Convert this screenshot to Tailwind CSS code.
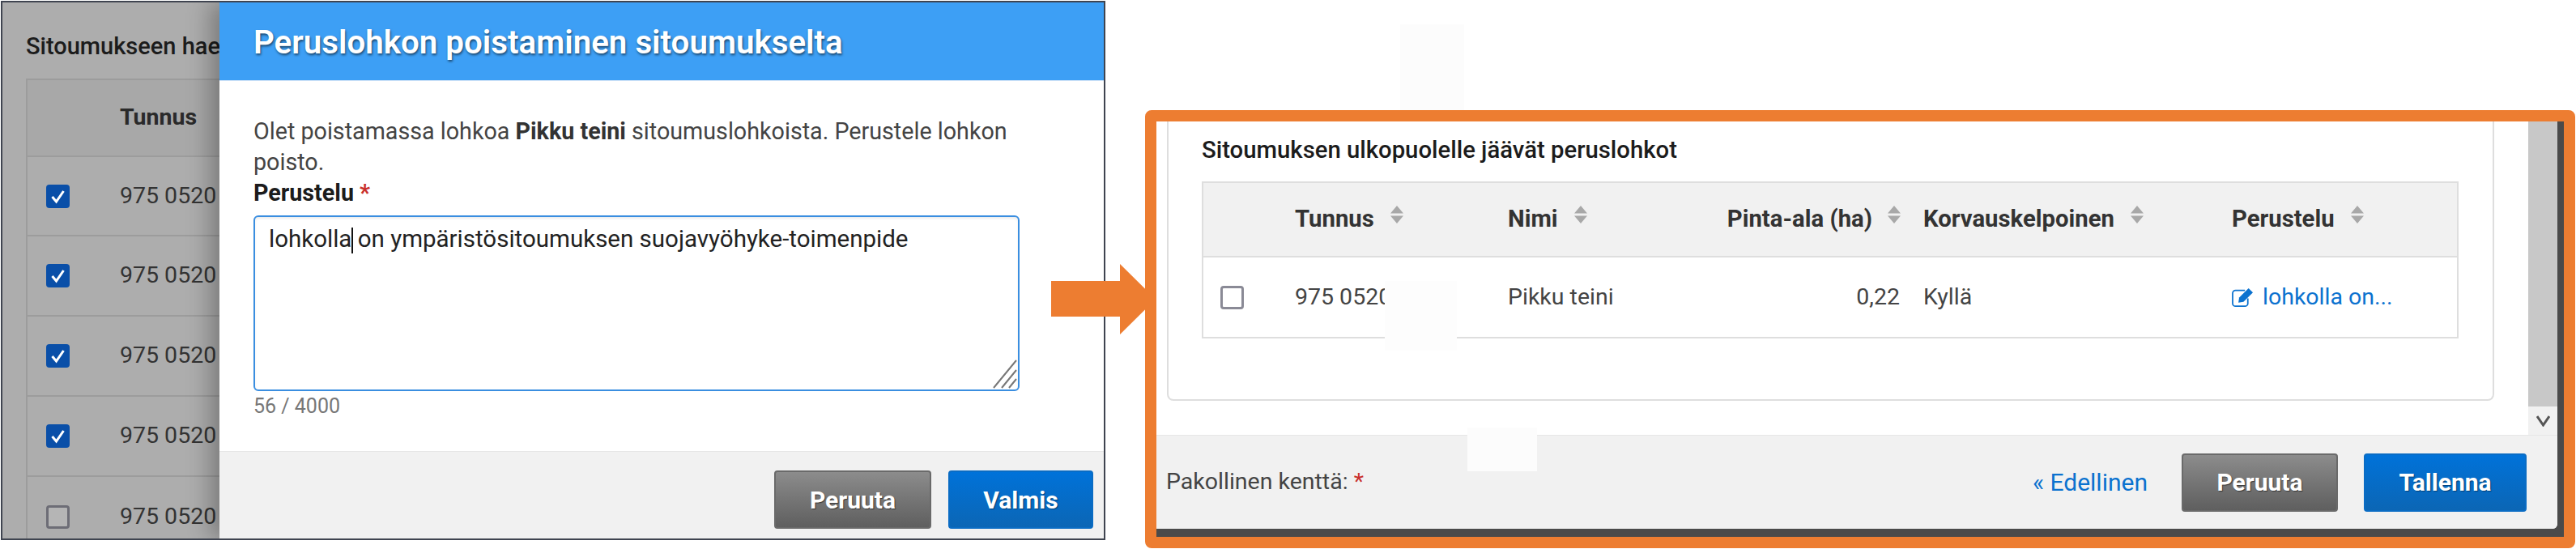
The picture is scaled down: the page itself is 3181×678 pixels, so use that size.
<!DOCTYPE html>
<html lang="fi">
<head>
    <meta charset="UTF-8">
    <title>Peruslohkon poistaminen sitoumukselta</title>
    <script src="https://cdn.jsdelivr.net/npm/@tailwindcss/browser@4"></script>
</head>
<body class="bg-white overflow-hidden font-['Roboto',sans-serif] text-[#444] text-[28.5px]">

<svg class="hidden">
    <symbol id="sort" viewBox="0 0 16 22"><path d="M8 0l8 9.500H0zM0 12.500h16L8 22z" fill="#a8a8a8"/></symbol>
    <symbol id="check" viewBox="0 0 29 29"><rect width="29" height="29" rx="4" fill="#0a4fa8"/><path d="M7.500 15l5 6L21.500 8" fill="none" stroke="#fff" stroke-width="3"/></symbol>
</svg>

<div class="relative w-[3181px] h-[678px]">

    <!-- left window -->
    <div class="absolute left-[1px] top-[1px] w-[1364px] h-[666px] border-2 border-[#3f4450] bg-[#adadad] overflow-hidden">
        <div class="w-[268px] overflow-hidden">
            <div class="pl-[29px] pt-[36px] h-[94px] font-medium text-[29px] text-[#1c1c1c] leading-[36px] whitespace-nowrap">Sitoumukseen hae</div>
            <div class="ml-[29px] border-l-2 border-[#9c9c9c]">
                <div class="h-[97px] border-y-2 border-[#9c9c9c] bg-[#a8a8a8] pl-[114px] flex items-center font-bold text-[#2a2a2a] text-[28.5px] whitespace-nowrap">Tunnus <svg class="ml-[21px] w-4 h-[22px] -mt-3 shrink-0"><use href="#sort"/></svg></div>
                <div class="h-[98px] border-b-2 border-[#9c9c9c] flex items-center whitespace-nowrap">
                    <svg class="ml-[23px] w-[29px] h-[29px] shrink-0"><use href="#check"/></svg><span class="ml-[62px] text-[#333]">975 0520</span>
                </div>
                <div class="h-[99px] border-b-2 border-[#9c9c9c] flex items-center whitespace-nowrap">
                    <svg class="ml-[23px] w-[29px] h-[29px] shrink-0"><use href="#check"/></svg><span class="ml-[62px] text-[#333]">975 0520</span>
                </div>
                <div class="h-[99px] border-b-2 border-[#9c9c9c] flex items-center whitespace-nowrap">
                    <svg class="ml-[23px] w-[29px] h-[29px] shrink-0"><use href="#check"/></svg><span class="ml-[62px] text-[#333]">975 0520</span>
                </div>
                <div class="h-[99px] border-b-2 border-[#9c9c9c] flex items-center whitespace-nowrap">
                    <svg class="ml-[23px] w-[29px] h-[29px] shrink-0"><use href="#check"/></svg><span class="ml-[62px] text-[#333]">975 0520</span>
                </div>
                <div class="h-[99px] flex items-center whitespace-nowrap">
                    <div class="ml-[23px] w-[29px] h-[29px] shrink-0 rounded border-[3px] border-[#6d6d76] bg-[#b5b5b5]"></div><span class="ml-[62px] text-[#333]">975 0520</span>
                </div>
            </div>
        </div>

        <!-- modal -->
        <div class="absolute left-[268px] top-0 right-0 bottom-0 bg-white flex flex-col shadow-[-12px_0_26px_rgba(0,0,0,.28)]">
            <div class="h-[97px] shrink-0 bg-[#3d9ff5] border-b border-[#cfe3f7] pl-[42px] pt-[4px] flex items-center text-white font-semibold text-[40.300px] [text-shadow:1px_2px_3px_rgba(0,0,0,.55)]">Peruslohkon poistaminen sitoumukselta</div>
            <div class="flex-1 pl-[42px] pr-[104px] pt-[43px] leading-[38px] text-[28.700px]">
                <p>Olet poistamassa lohkoa <b class="font-bold text-[#333]">Pikku teini</b> sitoumuslohkoista. Perustele lohkon poisto.</p>
                <div class="font-bold text-[#1c1c1c]">Perustelu <span class="text-[#c9302c]">*</span></div>
                <div class="relative mt-[9px] h-[217px] border-2 border-[#3a8ee0] rounded-md pl-[17px] pt-[10px] text-[#222] text-[29.500px] leading-[34px] shadow-[inset_0_2px_3px_rgba(0,0,0,.08)]">
                    lohkolla<span class="inline-block w-[2px] h-[32px] -mr-[2px] align-middle bg-[#111]"></span> on ympäristösitoumuksen suojavyöhyke-toimenpide
                    <svg class="absolute right-[1px] bottom-[1px] w-[30px] h-[36px]" viewBox="0 0 30 36" fill="none" stroke="#777" stroke-width="2"><path d="M1 35L29 1M11 35L29 13M20 35L29 24"/></svg>
                </div>
                <div class="mt-[3px] text-[25px] leading-[32px] text-[#777]">56 / 4000</div>
            </div>
            <div class="h-[108px] shrink-0 bg-[#f1f1f1] border-t border-[#e6e6e6] flex justify-end items-start pt-[23px] pr-[13px] gap-[21px]">
                <button class="w-[194px] h-[72px] rounded border-2 border-[#6a6a6a] bg-linear-to-b from-[#8c8c8c] to-[#5f5f5f] text-white font-bold text-[30px] [text-shadow:1px_1px_1px_rgba(0,0,0,.5)]">Peruuta</button>
                <button class="w-[179px] h-[72px] rounded border-2 border-[#0a6cc4] bg-linear-to-b from-[#0072d9] to-[#0b66b5] text-white font-bold text-[30px] [text-shadow:1px_1px_1px_rgba(0,0,0,.4)]">Valmis</button>
            </div>
        </div>
    </div>

    <!-- arrow between the two views -->
    <svg class="absolute left-[1298px] top-[326px] w-[130px] h-[87px]" viewBox="0 0 130 87"><path d="M0 21h85V0l44 43.500L85 87V65H0z" fill="#ed7d31"/></svg>

    <!-- faint erased patches -->
    <div class="absolute left-[1729px] top-[30px] w-[79px] h-[106px] bg-[#fcfcfc]"></div>

    <!-- right window -->
    <div class="absolute left-[1414px] top-[136px] w-[1766px] h-[541px] border-[14px] border-[#ed7d31] rounded-lg bg-[#4a4a4a] overflow-hidden">
        <div class="w-[1730px] h-[503px] bg-white rounded-br-md flex flex-col overflow-hidden">
            <div class="h-[388px] shrink-0 flex">
                <div class="w-[1694px] pl-[13px]">
                    <div class="w-[1639px] h-[345px] border-x-2 border-b-2 border-[#dedede] rounded-b-lg pl-[41px] pt-[17px]">
                        <h3 class="font-medium text-[29.300px] leading-[36px] text-[#1c1c1c]">Sitoumuksen ulkopuolelle jäävät peruslohkot</h3>
                        <div class="mt-[21px] w-[1552px] border-2 border-[#dedede]">
                            <div class="h-[92px] bg-[#f1f1f1] border-b-2 border-[#dedede] grid grid-cols-[113px_263px_259px_254px_381px_1fr] items-center font-bold text-[29.300px] text-[#333]">
                                <span></span>
                                <div class="flex items-center gap-[20px]">Tunnus <svg class="w-4 h-[22px] -mt-3"><use href="#sort"/></svg></div>
                                <div class="flex items-center gap-[20px]">Nimi <svg class="w-4 h-[22px] -mt-3"><use href="#sort"/></svg></div>
                                <div class="flex items-center justify-end gap-[19px] pr-[28px]">Pinta-ala (ha) <svg class="w-4 h-[22px] -mt-3"><use href="#sort"/></svg></div>
                                <div class="flex items-center gap-[20px]">Korvauskelpoinen <svg class="w-4 h-[22px] -mt-3"><use href="#sort"/></svg></div>
                                <div class="flex items-center gap-[20px]">Perustelu <svg class="w-4 h-[22px] -mt-3"><use href="#sort"/></svg></div>
                            </div>
                            <div class="h-[98px] grid grid-cols-[113px_263px_259px_254px_381px_1fr] items-center">
                                <div class="ml-[21px] w-[29px] h-[29px] rounded border-[3px] border-[#8a8a96]"></div>
                                <span>975 0520</span>
                                <span>Pikku teini</span>
                                <span class="text-right pr-[29px]">0,22</span>
                                <span>Kyllä</span>
                                <a class="flex items-center gap-[11px] text-[#0b72cf]">
                                    <svg class="w-[27px] h-[25px]" viewBox="0 0 30 28"><path d="M22 15v7a4 4 0 0 1-4 4H5a4 4 0 0 1-4-4V8a4 4 0 0 1 4-4h13" fill="none" stroke="#0b72cf" stroke-width="2"/><path d="M10 14L23 1l6 6-13 13-7 1z" fill="#0b72cf"/></svg>
                                    lohkolla on...
                                </a>
                            </div>
                        </div>
                    </div>
                </div>
                <div class="w-[36px] flex flex-col bg-[#f1f1f1]">
                    <div class="h-[352px] bg-[#c8c8c8]"></div>
                    <div class="flex-1 flex items-center justify-center">
                        <svg class="w-[17px] h-[14px]" viewBox="0 0 17 14"><path d="M1 1l7.500 11L16 1" fill="none" stroke="#555" stroke-width="3"/></svg>
                    </div>
                </div>
            </div>
            <div class="flex-1 bg-[#f1f1f1] border-t border-[#e6e6e6] flex items-center pl-[12px] pr-[38px] -mt-px">
                <span class="text-[#444]">Pakollinen kenttä: <span class="text-[#c9302c]">*</span></span>
                <a class="ml-auto text-[#0b72cf] text-[30px]">« Edellinen</a>
                <button class="ml-[42px] w-[193px] h-[72px] rounded border-2 border-[#6a6a6a] bg-linear-to-b from-[#8c8c8c] to-[#5f5f5f] text-white font-bold text-[30px] [text-shadow:1px_1px_1px_rgba(0,0,0,.5)]">Peruuta</button>
                <button class="ml-[32px] w-[201px] h-[72px] rounded border-2 border-[#0a6cc4] bg-linear-to-b from-[#0072d9] to-[#0b66b5] text-white font-bold text-[30px] [text-shadow:1px_1px_1px_rgba(0,0,0,.4)]">Tallenna</button>
            </div>
        </div>
    </div>

    <!-- patches over the blocked-out numbers -->
    <div class="absolute left-[1710px] top-[347px] w-[89px] h-[86px] bg-[#fdfdfd]"></div>
    <div class="absolute left-[1812px] top-[528px] w-[86px] h-[54px] bg-[#fcfcfc]"></div>
</div>

</body>
</html>
